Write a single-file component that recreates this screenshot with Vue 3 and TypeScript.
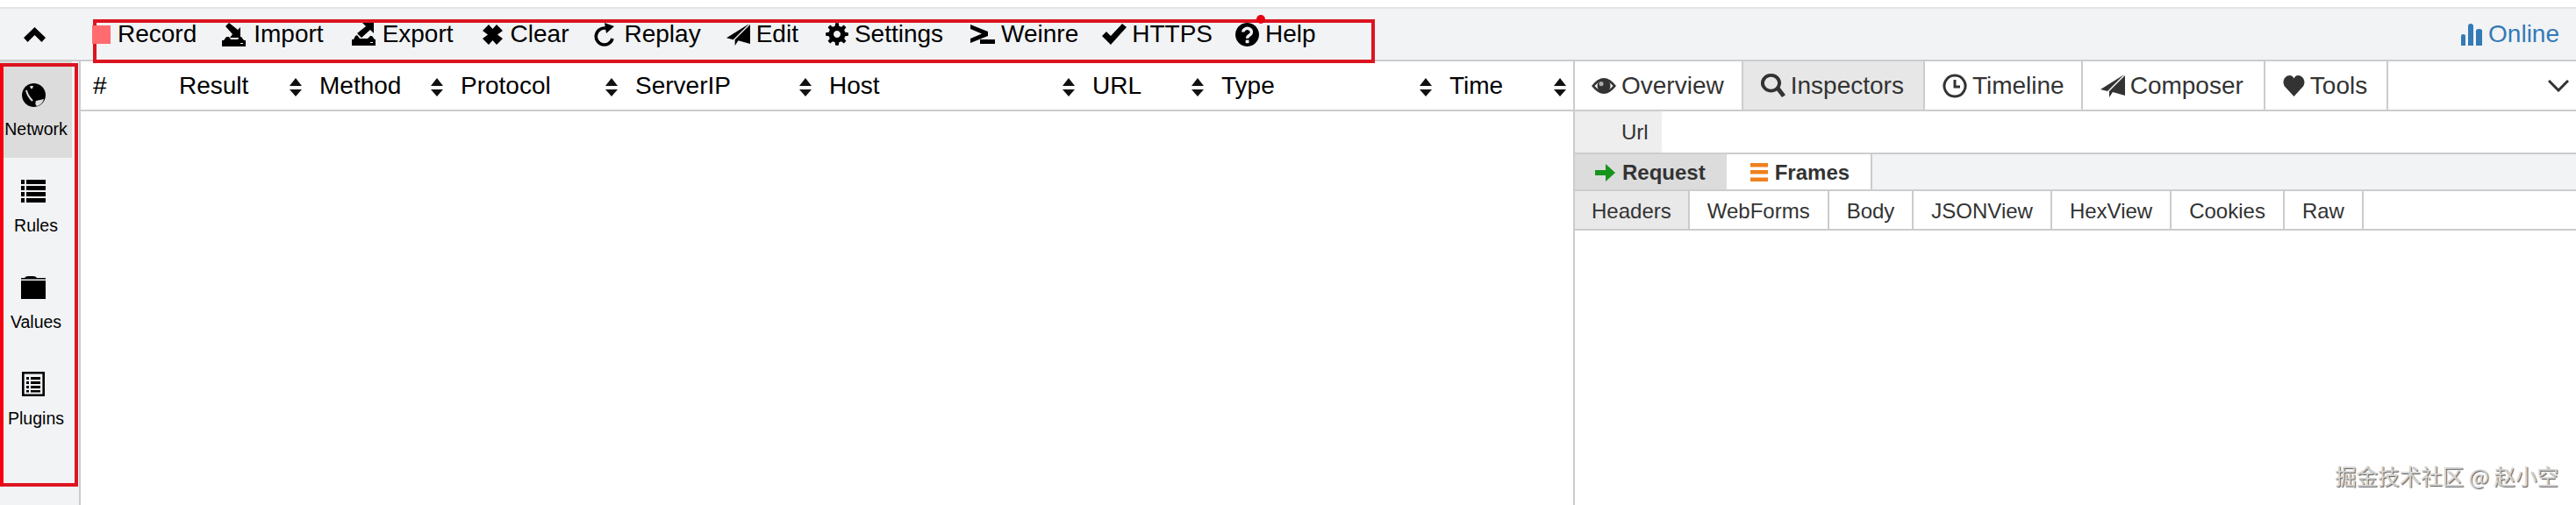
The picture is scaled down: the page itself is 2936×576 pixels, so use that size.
<script setup lang="ts">
import { h } from 'vue'

type Part = { d: string; fill?: string; stroke?: string; sw?: number }
type Def = { vb: string; parts: Part[] }

function gear(): string {
  const cx = 13, cy = 13, n = 8, ro = 13, ri = 9.6
  const pts: string[] = []
  for (let i = 0; i < n; i++) {
    const a = (i / n) * Math.PI * 2
    const s = Math.PI / n
    const p = (r: number, t: number) => `${(cx + r * Math.cos(t)).toFixed(2)} ${(cy + r * Math.sin(t)).toFixed(2)}`
    pts.push(p(ri, a - s * 0.62), p(ro, a - s * 0.36), p(ro, a + s * 0.36), p(ri, a + s * 0.62))
  }
  return `M${pts.join('L')}ZM13 9a4 4 0 1 0 .01 0Z`
}

const icons: Record<string, Def> = {
  up: { vb: '0 0 25 17', parts: [{ d: 'M12.5 0L25 12l-4.5 5-8-8-8 8L0 12Z' }] },
  rec: { vb: '0 0 21 21', parts: [{ d: 'M0 0h21v21H0Z', fill: '#ff6b6e' }] },
  imp: { vb: '0 0 27 27', parts: [
    { d: 'M8 0l10 8 3-3v12H9l3-4-8-9Z' },
    { d: 'M5 16h3l2 3h8l2-3h2l3 4H2Z' },
    { d: 'M0 20h27v7H0Z' },
    { d: 'M21 23h3v1h-3Z', fill: '#f2f3f5' }
  ] },
  exp: { vb: '0 0 27 26', parts: [
    { d: 'M25 0v12l-4-4-10 9-5-5 10-8-4-4Z' },
    { d: 'M4 15l2-1 3 4h9l3-3h2l3 4H2Z' },
    { d: 'M0 19h27v7H0Z' },
    { d: 'M21 22h3v1h-3Z', fill: '#f2f3f5' }
  ] },
  clear: { vb: '0 0 23 23', parts: [{ d: 'M7 0l4.5 5L16 0l7 7-6 4.5 6 4.5-7 7-4.5-5L7 23l-7-7 6-4.5L0 7Z' }] },
  replay: { vb: '0 0 25 27', parts: [
    { d: 'M21 18A9.5 9.5 0 1 1 14 6.3', fill: 'none', stroke: 'currentColor', sw: 3.6 },
    { d: 'M12 0l11 4-9 8Z' }
  ] },
  send: { vb: '0 0 28 27', parts: [
    { d: 'M27 1L0 18l8 2Z' },
    { d: 'M28 2L10 20v7l4-6 14 4Z' }
  ] },
  cog: { vb: '0 0 26 26', parts: [{ d: gear() }] },
  wein: { vb: '0 0 28 22', parts: [
    { d: 'M0 0l20 8v5L0 21v-5l13-5.5L0 5Z' },
    { d: 'M11 17h17v5H11Z' }
  ] },
  ok: { vb: '0 0 28 24', parts: [{ d: 'M0 14l5-5 5 5L23 0l5 4-18 20Z' }] },
  help: { vb: '0 0 27 27', parts: [
    { d: 'M13.5 0a13.5 13.5 0 1 0 .01 0Z' },
    { d: 'M8.8 10.5a4.8 4.2 0 1 1 7.4 3.6c-1.8 1.1-2.6 1.8-2.6 3.6', fill: 'none', stroke: '#f2f3f5', sw: 3.4 },
    { d: 'M11.7 19.6h3.8v3.6h-3.8Z', fill: '#f2f3f5' }
  ] },
  eye: { vb: '0 0 28 22', parts: [
    { d: 'M0 11Q14-7 28 11 14 29 0 11Z' },
    { d: 'M3.5 11Q14-1 24.5 11 14 23 3.5 11Z', fill: '#fff' },
    { d: 'M14 3.5a7.5 7.5 0 1 0 .01 0Z' },
    { d: 'M11 6a2.6 2.6 0 1 0 .01 0Z', fill: '#aaa' }
  ] },
  search: { vb: '0 0 28 30', parts: [
    { d: 'M11.5 2a9.5 9.5 0 1 0 .01 0Z', fill: 'none', stroke: 'currentColor', sw: 4 },
    { d: 'M17 19l4-3 7 10-4 3Z' }
  ] },
  time: { vb: '0 0 28 28', parts: [
    { d: 'M14 2a12 12 0 1 0 .01 0Z', fill: 'none', stroke: 'currentColor', sw: 3 },
    { d: 'M14 7v8h6', fill: 'none', stroke: 'currentColor', sw: 3 }
  ] },
  heart: { vb: '0 0 26 24', parts: [{ d: 'M13 24L2 12.5C-2 6 3 0 8 0c2.500 0 4 1.500 5 3.500C14 1.500 15.500 0 18 0c5 0 10 6 6 12.500Z' }] },
  stats: { vb: '0 0 24 25', parts: [
    { d: 'M0 14q0-2 2.500-2T5 14v11H0Z' },
    { d: 'M8 3q0-3 3-3t3 3v22H8Z' },
    { d: 'M17 8q0-2 3.500-2T24 8v17h-7Z' }
  ] },
  go: { vb: '0 0 23 20', parts: [{ d: 'M0 7h12V0l11 10-11 10v-7H0Z' }] },
  bars: { vb: '0 0 20 21', parts: [{ d: 'M0 0h20v4.500H0ZM0 8h20v4.500H0ZM0 16.500h20V21H0Z' }] },
  globe: { vb: '0 0 27 27', parts: [
    { d: 'M13.500 0a13.500 13.500 0 1 0 .01 0Z' },
    { d: 'M5 8c1 5 3 8 7 12', fill: 'none', stroke: '#dcdcdc', sw: 2 },
    { d: 'M16 20l9-2c-1 4-4 7-8 8-2-1-2-4-1-6Z', fill: '#dcdcdc' },
    { d: 'M9 3h4l-1 3h-2Z', fill: '#dcdcdc' }
  ] },
  list: { vb: '0 0 28 26', parts: [{ d: 'M0 0h4v5H0ZM6 0h22v5H6ZM0 7h4v5H0ZM6 7h22v5H6ZM0 14h4v5H0ZM6 14h22v5H6ZM0 21h4v5H0ZM6 21h22v5H6Z' }] },
  folder: { vb: '0 0 28 26', parts: [
    { d: 'M4 2q1-2 4-2h6q3 0 4 2h10v1.500H0V2Z' },
    { d: 'M0 5h28v21H0Z' }
  ] },
  plug: { vb: '0 0 26 28', parts: [
    { d: 'M1.300 1.300h23.400v25.400H1.300Z', fill: 'none', stroke: 'currentColor', sw: 2.600 },
    { d: 'M5 6h3v3H5ZM10 6h11v3H10ZM5 11h3v3H5ZM10 11h11v3H10ZM5 16h3v3H5ZM10 16h11v3H10ZM5 21h3v2.500H5ZM10 21h11v2.500H10Z' }
  ] }
}

const Icon = (props: { n: string; w: number; ht: number }) => {
  const def = icons[props.n]
  return h(
    'svg',
    { viewBox: def.vb, width: props.w, height: props.ht, preserveAspectRatio: 'none', 'aria-hidden': 'true', class: 'ico' },
    def.parts.map((p) =>
      h('path', {
        d: p.d,
        fill: p.fill ?? 'currentColor',
        stroke: p.stroke ?? 'none',
        'stroke-width': p.sw ?? 0,
        'fill-rule': 'evenodd'
      })
    )
  )
}
Icon.props = ['n', 'w', 'ht']

const tools = [
  { label: 'Record', n: 'rec', w: 21, ht: 21 },
  { label: 'Import', n: 'imp', w: 27, ht: 27 },
  { label: 'Export', n: 'exp', w: 27, ht: 26 },
  { label: 'Clear', n: 'clear', w: 23, ht: 23 },
  { label: 'Replay', n: 'replay', w: 25, ht: 27 },
  { label: 'Edit', n: 'send', w: 27, ht: 26 },
  { label: 'Settings', n: 'cog', w: 26, ht: 26 },
  { label: 'Weinre', n: 'wein', w: 28, ht: 22 },
  { label: 'HTTPS', n: 'ok', w: 28, ht: 24 },
  { label: 'Help', n: 'help', w: 27, ht: 27 }
]
const sideItems = [
  { label: 'Network', n: 'globe', w: 27, ht: 27, active: true },
  { label: 'Rules', n: 'list', w: 28, ht: 26, active: false },
  { label: 'Values', n: 'folder', w: 28, ht: 26, active: false },
  { label: 'Plugins', n: 'plug', w: 26, ht: 28, active: false }
]
const columns = ['Result', 'Method', 'Protocol', 'ServerIP', 'Host', 'URL', 'Type', 'Time']
const tabs = [
  { label: 'Overview', n: 'eye', w: 28, ht: 22, active: false },
  { label: 'Inspectors', n: 'search', w: 28, ht: 28, active: true },
  { label: 'Timeline', n: 'time', w: 28, ht: 28, active: false },
  { label: 'Composer', n: 'send', w: 28, ht: 27, active: false },
  { label: 'Tools', n: 'heart', w: 25, ht: 24, active: false }
]
const subTabs = ['Headers', 'WebForms', 'Body', 'JSONView', 'HexView', 'Cookies', 'Raw']
</script>

<template>
  <div class="page">
    <div class="strip"></div>
    <header class="toolbar">
      <button class="collapse"><Icon n="up" :w="25" :ht="17" /></button>
      <nav class="tools">
        <a v-for="t in tools" :key="t.label" class="tool" :class="'t-' + t.label">
          <Icon :n="t.n" :w="t.w" :ht="t.ht" />
          <span>{{ t.label }}</span>
        </a>
      </nav>
      <a class="online"><Icon n="stats" :w="24" :ht="25" /><span>Online</span></a>
      <div class="mark mark-tools"></div>
      <div class="dot"></div>
    </header>

    <div class="body">
      <aside class="side">
        <a v-for="s in sideItems" :key="s.label" class="side-item" :class="{ on: s.active }">
          <span class="side-icon"><Icon :n="s.n" :w="s.w" :ht="s.ht" /></span>
          <span class="side-label">{{ s.label }}</span>
        </a>
        <div class="mark mark-side"></div>
      </aside>

      <main class="main">
        <div class="thead">
          <div class="th"><span>#</span></div>
          <div v-for="c in columns" :key="c" class="th">
            <span>{{ c }}</span>
            <i class="sort"><b class="tri-up"></b><b class="tri-down"></b></i>
          </div>
        </div>
      </main>

      <section class="panel">
        <div class="tabs">
          <a v-for="t in tabs" :key="t.label" class="tab" :class="[{ on: t.active }, 'p-' + t.label]">
            <Icon :n="t.n" :w="t.w" :ht="t.ht" />
            <span>{{ t.label }}</span>
          </a>
          <svg class="more" viewBox="0 0 24 14" width="24" height="14" aria-hidden="true">
            <path d="M1 1l11 11L23 1" fill="none" stroke="#333" stroke-width="3" />
          </svg>
        </div>
        <div class="url-row"><span class="url">Url</span></div>
        <div class="req-row">
          <a class="req on"><Icon class="green" n="go" :w="23" :ht="20" /><span>Request</span></a>
          <a class="req"><Icon class="orange" n="bars" :w="20" :ht="21" /><span>Frames</span></a>
        </div>
        <div class="sub-row">
          <a v-for="(s, i) in subTabs" :key="s" class="sub" :class="{ on: i === 0 }">{{ s }}</a>
        </div>
      </section>
    </div>

    <div class="watermark">掘金技术社区 @ 赵小空</div>
  </div>
</template>

<style scoped>
.page {
  position: relative;
  width: 2936px;
  height: 576px;
  overflow: hidden;
  display: flex;
  flex-direction: column;
  background: #fff;
  font-family: "Liberation Sans", Arial, sans-serif;
  color: #000;
}
.strip {
  height: 8px;
  flex: none;
  border-bottom: 2px solid #e4e4e4;
  box-sizing: content-box;
}
.toolbar {
  position: relative;
  flex: none;
  height: 60px;
  box-sizing: border-box;
  display: flex;
  align-items: center;
  background: #f2f3f5;
  border-bottom: 2px solid #ccc;
  font-size: 28px;
}
.collapse {
  flex: none;
  width: 105px;
  padding: 0 0 0 27px;
  border: 0;
  background: none;
  color: #000;
  display: flex;
  align-items: center;
}
.tools {
  display: flex;
  align-items: center;
  gap: 30px;
}
.tool {
  display: flex;
  align-items: center;
  gap: 8px;
}
.t-Record { gap: 8px; }
.t-Record .ico { position: relative; z-index: 2; }
.t-Import { gap: 9px; margin-left: -1px; }
.t-Export { margin-left: 2px; }
.t-Clear { gap: 9px; margin-left: 3px; }
.t-Replay { gap: 9px; margin-left: -1px; }
.t-Edit { gap: 7px; margin-left: -1px; }
.t-Settings { gap: 7px; margin-left: 1px; }
.t-Weinre { gap: 7px; margin-left: 1px; }
.t-HTTPS { gap: 6px; margin-left: -3px; }
.t-Help { gap: 7px; margin-left: -4px; }
.ico {
  flex: none;
  display: block;
}
.online {
  margin-left: auto;
  padding-right: 19px;
  display: flex;
  align-items: center;
  gap: 7px;
  color: #337ab7;
}
.mark {
  position: absolute;
  box-sizing: border-box;
  border: 4px solid #dc1420;
  pointer-events: none;
}
.mark-tools {
  left: 106px;
  top: 12px;
  width: 1461px;
  height: 50px;
}
.dot {
  position: absolute;
  left: 1432px;
  top: 7px;
  width: 10px;
  height: 10px;
  border-radius: 50%;
  background: #e60012;
}
.body {
  flex: 1;
  min-height: 0;
  display: flex;
}
.side {
  position: relative;
  flex: none;
  width: 92px;
  box-sizing: border-box;
  background: #f2f3f5;
  border-right: 2px solid #ccc;
  display: flex;
  flex-direction: column;
}
.side-item {
  height: 110px;
  width: 82px;
  flex: none;
  display: flex;
  flex-direction: column;
  align-items: center;
  font-size: 19.5px;
}
.side-item.on {
  background: #dcdcdc;
}
.side-icon {
  height: 28px;
  margin: 24px 6px 0 0;
  display: flex;
  align-items: center;
  justify-content: center;
}
.side-label {
  margin-top: 13px;
  line-height: 24px;
}
.mark-side {
  left: 0;
  top: 2px;
  width: 89px;
  height: 483px;
  border-left-color: #f5000f;
}
.main {
  flex: none;
  width: 1701px;
}
.thead {
  height: 57px;
  box-sizing: border-box;
  border-bottom: 2px solid #ccc;
  display: grid;
  grid-template-columns: 98px 160px 161px 199px 221px 300px 147px 260px 155px;
  font-size: 28px;
}
.th {
  display: flex;
  align-items: center;
  justify-content: space-between;
  padding: 0 6px 0 14px;
}
.th:last-child {
  padding-right: 8px;
}
.sort {
  display: flex;
  flex-direction: column;
  align-items: center;
  gap: 4px;
  width: 14px;
  margin-top: 3px;
}
.tri-up,
.tri-down {
  width: 0;
  height: 0;
  border-left: 7px solid transparent;
  border-right: 7px solid transparent;
}
.tri-up {
  border-bottom: 9px solid #111;
}
.tri-down {
  border-top: 8px solid #111;
}
.panel {
  flex: 1;
  min-width: 0;
  border-left: 2px solid #ccc;
  color: #333;
}
.tabs {
  position: relative;
  height: 57px;
  box-sizing: border-box;
  border-bottom: 2px solid #ccc;
  display: flex;
  font-size: 28px;
}
.tab {
  display: flex;
  align-items: center;
  gap: 6px;
  padding: 0 20px;
  border-right: 2px solid #ccc;
}
.tab:first-child {
  padding-left: 19px;
}
.tab.on {
  background: #e7e7e7;
}
.p-Inspectors { padding-right: 22px; }
.p-Timeline { padding-right: 19px; }
.p-Composer { padding-right: 23px; }
.p-Tools { padding-right: 22px; }
.more {
  margin: auto 8px auto auto;
  flex: none;
}
.url-row {
  height: 49px;
  box-sizing: border-box;
  border-bottom: 2px solid #ccc;
  display: flex;
  font-size: 24px;
}
.url {
  width: 99px;
  box-sizing: border-box;
  padding-left: 53px;
  background: #eee;
  display: flex;
  align-items: center;
}
.req-row {
  height: 42px;
  box-sizing: border-box;
  background: #f2f3f5;
  border-bottom: 2px solid #ccc;
  display: flex;
  font-size: 24px;
  font-weight: 700;
}
.req {
  display: flex;
  align-items: center;
  gap: 8px;
  padding: 1px 24px 0 27px;
  background: #fff;
  border-right: 2px solid #ccc;
}
.req.on {
  padding-left: 23px;
  background: #dcdcdc;
  border-right: 0;
}
.green {
  color: #16941c;
}
.orange {
  color: #f0801e;
}
.sub-row {
  height: 45px;
  box-sizing: border-box;
  border-bottom: 2px solid #ccc;
  display: flex;
  font-size: 24px;
}
.sub {
  display: flex;
  align-items: center;
  padding: 2px 20px 0;
  border-right: 2px solid #ccc;
}
.sub:first-child {
  padding: 2px 19px 0;
}
.sub.on {
  background: #e9e9e9;
}
.watermark {
  position: absolute;
  right: 20px;
  bottom: 20px;
  font-family: "Noto Sans CJK SC", "Liberation Sans", sans-serif;
  font-size: 24.5px;
  line-height: 26px;
  color: #d4d4d4;
  text-shadow: 1px 1px 1px #555, -1px -1px 0 #fff;
}
</style>
